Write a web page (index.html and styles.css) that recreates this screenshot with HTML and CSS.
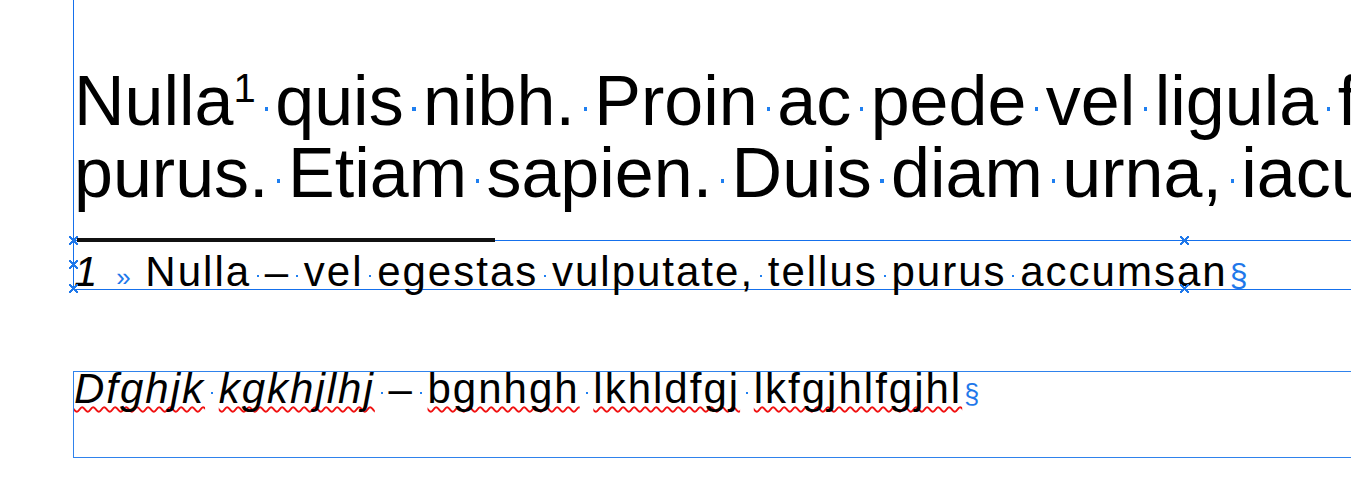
FILE: index.html
```html
<!DOCTYPE html>
<html>
    <head>
        <meta charset="UTF-8">
        <title>Story editor</title>
        <link rel="stylesheet" href="styles.css">
    </head>
    <body>
        <div class="frame">
            <p class="body-text">
                <span class="line">Nulla<sup class="fnref">1</sup><span class="s"> </span>quis<span class="s"> </span>nibh.<span class="s"> </span>Proin<span class="s"> </span>ac<span class="s"> </span>pede<span class="s"> </span>vel<span class="s"> </span>ligula<span class="s"> </span>facilisis</span>
                <span class="line">purus.<span class="s"> </span>Etiam<span class="s"> </span>sapien.<span class="s"> </span>Duis<span class="s"> </span>diam<span class="s"> </span>urna,<span class="s"> </span>iaculis</span>
            </p>
            <div class="footnotes">
                <span class="mark m1"></span>
                <span class="mark m2"></span>
                <span class="mark m3"></span>
                <span class="mark m4"></span>
                <span class="mark m5"></span>
                <p class="fn"><i>1</i><span class="tab">»</span><span class="fn-text">Nulla<span class="s"> </span>–<span class="s"> </span>vel<span class="s"> </span>egestas<span class="s"> </span>vulputate,<span class="s"> </span>tellus<span class="s"> </span>purus<span class="s"> </span>accumsan</span><span class="pil">§</span></p>
            </div>
        </div>

        <div class="frame2">
            <p class="para"><i class="typo">Dfghjk</i><span class="s"> </span><i class="typo">kgkhjlhj</i><span class="s"> </span>–<span class="s"> </span><span class="typo">bgnhgh</span><span class="s"> </span><span class="typo">lkhldfgj</span><span class="s"> </span><span class="typo">lkfgjhlfgjhl</span><span class="pil small">§</span></p>
        </div>
    </body>
</html>
```

FILE: styles.css
```css
html,body{
    margin: 0;
    overflow: hidden;
    background: #fff;
    color: #000;
    font-family: "Liberation Sans", Arial, sans-serif;
}
p{
    margin: 0;
    white-space: nowrap;
}

.frame{
    margin-left: 73px;
    padding-top: 65px;
    border-left: 1px solid #1570ec;
}
.body-text{
    font-size: 70px;
    line-height: 72px;
    margin-bottom: 31px;
}
.line{
    display: block;
}
.fnref{
    font-size: 40px;
    line-height: 0;
    vertical-align: 23px;
}

/* hidden characters: space dots, tab, end of story */
.s{
    position: relative;
}
.s::after{
    content: "";
    position: absolute;
    left: 50%;
    bottom: 0.42em;
    width: 0.045em;
    height: 0.045em;
    min-width: 2px;
    min-height: 2px;
    margin-left: -1px;
    background: #1f7ff0;
}
.pil{
    color: #1f78ea;
    font-size: 32px;
    padding-left: 2px;
    letter-spacing: 0;
}
.pil.small{
    font-size: 27px;
}

.footnotes{
    position: relative;
    border-top: 1px solid #1570ec;
    border-bottom: 1px solid #1570ec;
}
.footnotes::before{
    content: "";
    position: absolute;
    top: -3px;
    left: 3px;
    width: 418px;
    height: 4px;
    background: #111;
}
.fn{
    font-size: 42px;
    line-height: 42px;
    height: 38px;
    padding-top: 10px;
}
.fn-text{
    letter-spacing: 2px;
}
.tab{
    display: inline-block;
    box-sizing: border-box;
    width: 48px;
    padding-left: 19px;
    font-size: 26px;
    line-height: 0;
    color: #1f78ea;
}

.mark{
    position: absolute;
    width: 9px;
    height: 9px;
    background:
        linear-gradient(45deg, transparent 44%, #1f78ea 44%, #1f78ea 58%, transparent 58%),
        linear-gradient(-45deg, transparent 44%, #1f78ea 44%, #1f78ea 58%, transparent 58%);
}
.m1{ left: -5px; top: -5px; }
.m2{ left: -5px; top: 19px; }
.m3{ left: -5px; top: 43px; }
.m4{ left: 1106px; top: -5px; }
.m5{ left: 1106px; top: 43px; }

.frame2{
    margin: 81px 0 0 73px;
    height: 85px;
    border: 1px solid #2f82ec;
    border-right: none;
}
.para{
    font-size: 42px;
    line-height: 33px;
    letter-spacing: 2px;
}
.typo{
    text-decoration: underline wavy #f01010;
    text-decoration-thickness: 1.5px;
    text-underline-offset: 3px;
    text-decoration-skip-ink: none;
}
```
